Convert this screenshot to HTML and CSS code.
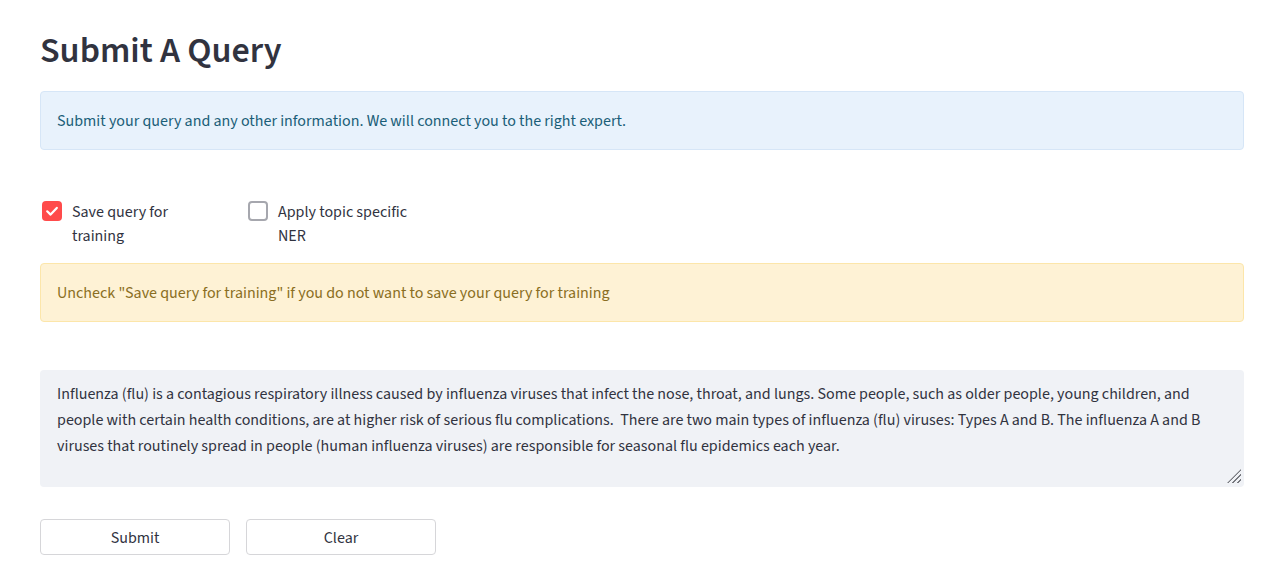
FILE: index.html
```html
<!DOCTYPE html>
<html lang="en">
<head>
<meta charset="utf-8">
<title>Submit A Query</title>
<link rel="stylesheet" href="styles.css">
</head>
<body>
<main class="main">
  <h1 class="title">Submit A Query</h1>
  <div class="alert alert-info">Submit your query and any other information. We will connect you to the right expert.</div>

  <div class="columns checks">
    <label class="check">
      <span class="box box-on">
        <svg viewBox="0 0 20 20" width="20" height="20"><path d="M5.2 10.3 L8.6 13.6 L14.8 6.9" fill="none" stroke="#fff" stroke-width="2.2" stroke-linecap="round" stroke-linejoin="round"/></svg>
      </span>
      <span class="check-label">Save query for training</span>
    </label>
    <label class="check">
      <span class="box box-off"></span>
      <span class="check-label">Apply topic specific NER</span>
    </label>
  </div>

  <div class="alert alert-warn">Uncheck "Save query for training" if you do not want to save your query for training</div>

  <div class="query-wrap">
    <textarea class="query">Influenza (flu) is a contagious respiratory illness caused by influenza viruses that infect the nose, throat, and lungs. Some people, such as older people, young children, and people with certain health conditions, are at higher risk of serious flu complications.  There are two main types of influenza (flu) viruses: Types A and B. The influenza A and B viruses that routinely spread in people (human influenza viruses) are responsible for seasonal flu epidemics each year.</textarea>
  </div>

  <div class="columns buttons">
    <button class="btn" type="button">Submit</button>
    <button class="btn" type="button">Clear</button>
  </div>
</main>
</body>
</html>
```

FILE: styles.css
```css
* { box-sizing: border-box; }

html, body {
  margin: 0;
  padding: 0;
  background: #ffffff;
}

body {
  font-family: "Source Sans Pro", "Source Sans 3", "Open Sans", sans-serif;
  font-size: 16px;
  color: rgb(49, 51, 63);
}

.main {
  width: 1270px;
  padding: 29px 26px 0 40px;
}

.title {
  margin: 0;
  font-size: 36px;
  line-height: 44px;
  font-weight: 600;
  color: rgb(49, 51, 63);
}

.alert {
  border-radius: 4px;
  padding: 17px 16px 16px 16px;
  line-height: 24px;
  font-size: 16px;
}

.alert-info {
  margin-top: 18px;
  background: rgb(232, 242, 252);
  border: 1px solid rgb(214, 230, 247);
  color: rgb(26, 94, 120);
}

.alert-warn {
  margin-top: 15px;
  background: rgb(254, 242, 213);
  border: 1px solid rgb(252, 230, 170);
  color: rgb(138, 110, 34);
}

.columns {
  display: grid;
  grid-template-columns: 190px 190px;
  column-gap: 16px;
}

.checks {
  margin-top: 50px;
}

.check {
  display: flex;
  align-items: flex-start;
  gap: 10px;
  padding-left: 2px;
  line-height: 24px;
  cursor: pointer;
}

.box {
  flex: 0 0 20px;
  width: 20px;
  height: 20px;
  margin-top: 1px;
  border-radius: 4px;
  display: block;
}

.box svg { display: block; }

.box-on {
  background: #ff4b4b;
}

.box-off {
  border: 2px solid rgb(166, 167, 174);
  background: #fff;
}

.check-label {
  width: 136px;
}

.query-wrap {
  position: relative;
  margin-top: 48px;
}

.query-wrap::after {
  content: "";
  position: absolute;
  right: 3px;
  bottom: 4px;
  width: 14px;
  height: 14px;
  background: repeating-linear-gradient(135deg, transparent 0 2.2px, rgb(120, 122, 128) 2.2px 3.6px);
  clip-path: polygon(100% 0, 100% 100%, 0 100%);
  pointer-events: none;
}

.query {
  display: block;
  width: 100%;
  height: 117px;
  padding: 10px 16px;
  border: 1px solid transparent;
  border-radius: 4px;
  background: rgb(240, 242, 246);
  color: rgb(49, 51, 63);
  font-family: inherit;
  font-size: 16px;
  line-height: 26px;
  resize: none;
  outline: none;
}

.buttons {
  margin-top: 32px;
}

.btn {
  height: 36px;
  width: 190px;
  border: 1px solid rgb(214, 214, 217);
  border-radius: 4px;
  background: #fff;
  color: rgb(49, 51, 63);
  font-family: inherit;
  font-size: 16px;
  line-height: 24px;
  padding: 2px 0 0 0;
  cursor: pointer;
}
```
